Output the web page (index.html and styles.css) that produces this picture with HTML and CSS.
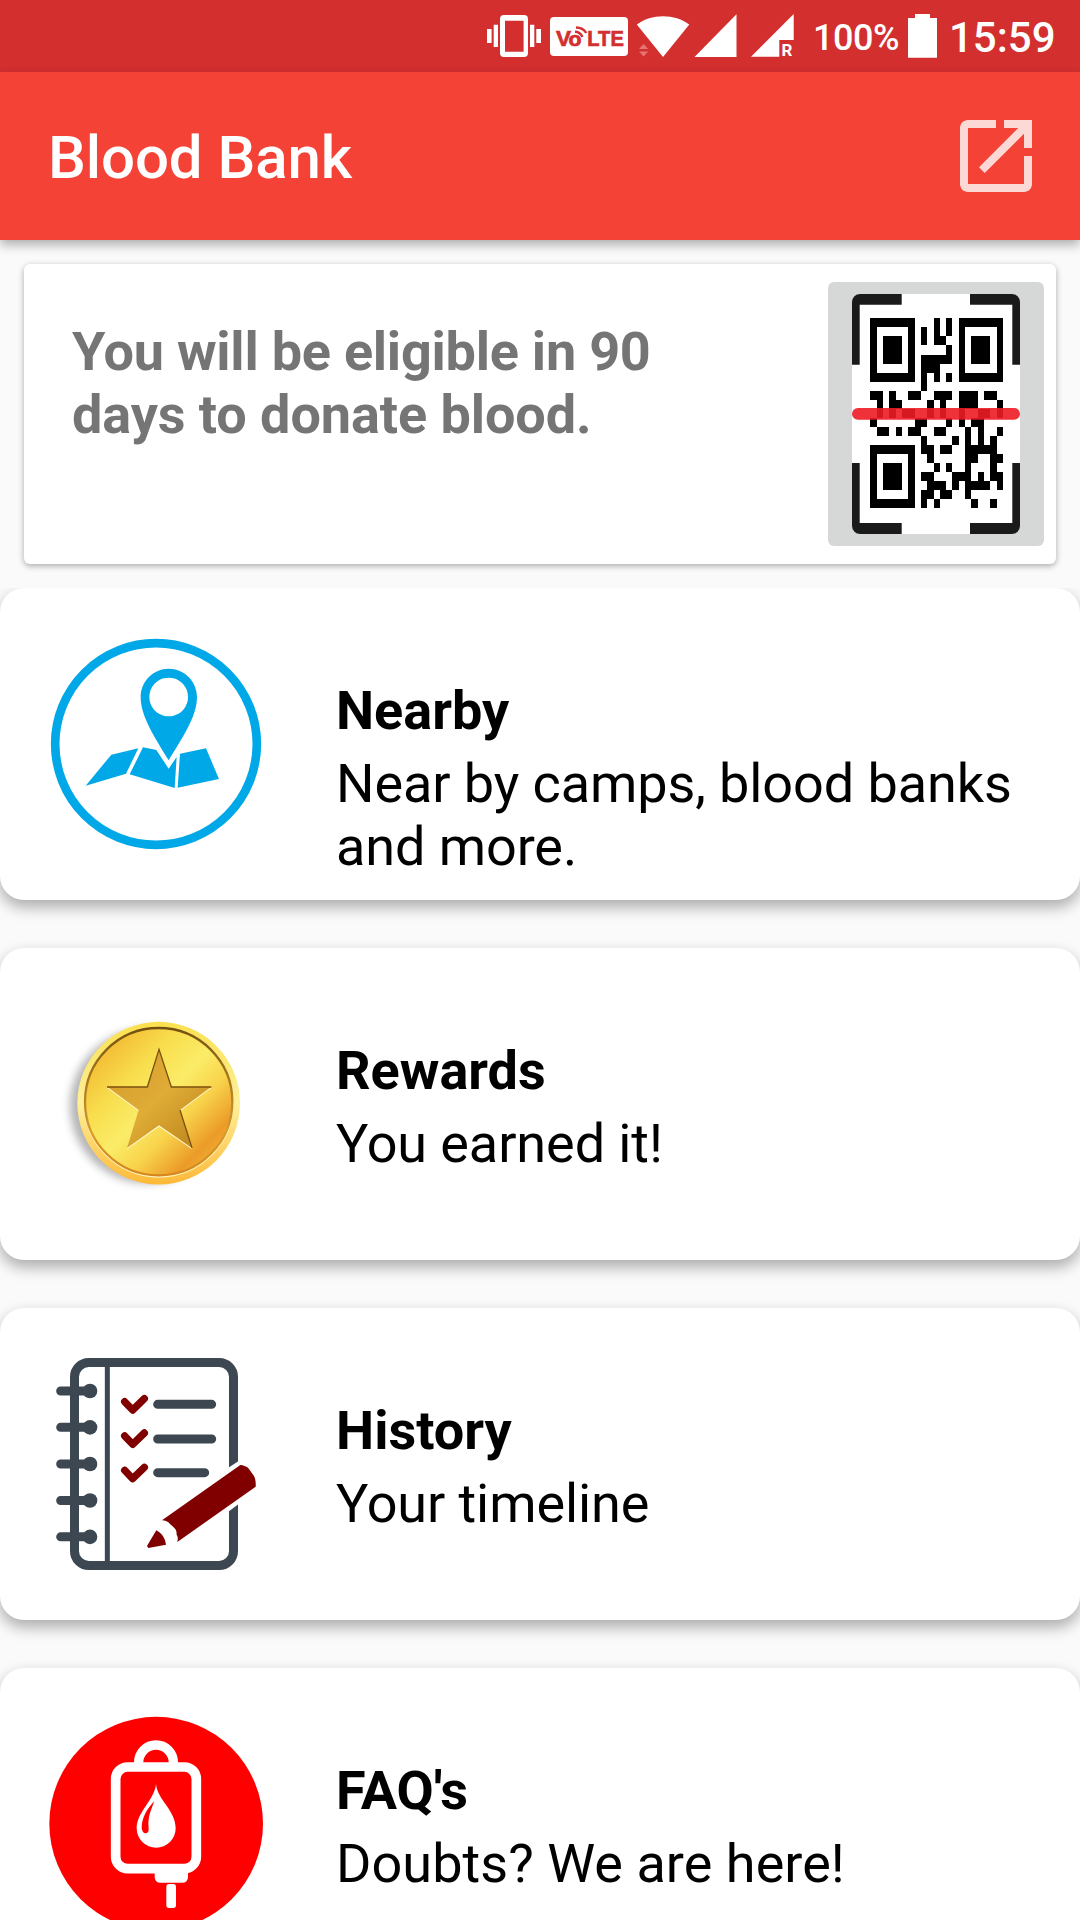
FILE: index.html
```html
<!DOCTYPE html>
<html lang="en">
<head>
<meta charset="utf-8">
<title>Blood Bank</title>
<link rel="stylesheet" href="styles.css">
</head>
<body>
<div class="screen">
  <div class="status-bar">
    <svg class="st-vibrate" width="56" height="72" viewBox="0 0 56 72" fill="#fff">
      <path fill-rule="evenodd" d="M18 15h20a4 4 0 0 1 4 4v34a4 4 0 0 1-4 4H18a4 4 0 0 1-4-4V19a4 4 0 0 1 4-4zM19 20.700v31h18.600v-31z"/>
      <path d="M1 29h4.600v14H1zM7.700 24.700H12V47H7.700zM44 24.700h4.300V47H44zM50.300 29H55v14h-4.700z"/>
    </svg>
    <svg class="st-volte" width="78" height="72" viewBox="0 0 78 72">
      <rect y="17" width="78" height="39" rx="4" fill="#fff"/>
      <g class="volte-text">
        <text x="6" y="45.800" font-size="22.500" textLength="15" lengthAdjust="spacingAndGlyphs">V</text>
        <text x="18.600" y="46.200" font-size="20" textLength="13" lengthAdjust="spacingAndGlyphs">o</text>
        <text x="37.300" y="45.800" font-size="22.500" textLength="36.500" lengthAdjust="spacingAndGlyphs">LTE</text>
      </g>
      <path d="M25 31.800Q30 31.800 32.500 37M26 27.500Q33 27.500 36.300 33" fill="none" stroke="#d32f2f" stroke-width="2.400"/>
    </svg>
    <svg class="st-wifi" width="54" height="72" viewBox="0 0 54 72">
      <path d="M.8 24.600C15 13.300 39 13.300 53.300 24.600L27 57z" fill="#fff"/>
      <path d="M3 49l4.600-5 4.600 5zM3 51.500l4.600 5 4.600-5z" fill="#e37575"/>
    </svg>
    <svg class="st-signal" width="43" height="72" viewBox="0 0 43 72"><path d="M.5 57H42.500V14.300z" fill="#fff"/></svg>
    <svg class="st-signal-r" width="43" height="72" viewBox="0 0 43 72">
      <path d="M0 56.700L42.700 14v26H28.300v16.700z" fill="#fff"/>
      <text class="roaming" x="30.500" y="56">R</text>
    </svg>
    <span class="battery-level">100%</span>
    <svg class="st-battery" width="29" height="72" viewBox="0 0 29 72"><path d="M7 14h15v4h7v39.700H0V18h7z" fill="#fff"/></svg>
    <span class="clock">15:59</span>
  </div>

  <header class="app-bar">
    <h1 class="app-title">Blood Bank</h1>
    <svg class="open-icon" viewBox="0 0 24 24"><path d="M19 19H5V5h7V3H5c-1.110 0-2 .9-2 2v14c0 1.100.89 2 2 2h14c1.100 0 2-.9 2-2v-7h-2v7zM14 3v2h3.590l-9.830 9.830 1.410 1.410L19 6.410V10h2V3h-7z"/></svg>
  </header>

  <section class="status-card">
    <p class="eligibility"><span class="waiting-period">You will be eligible in 90</span> days to donate blood.</p>
    <div class="qr-button">
      <svg width="168" height="240" viewBox="0 0 168 240">
        <rect width="168" height="240" rx="8" fill="#fff"/>
        <path d="M0 60h8v120H0zM160 60h8v120h-8z" fill="#fff"/>
        <path fill="#1a1a1a" d="M8 0H49.700V10.700H7.700V70.700H0V8A8 8 0 0 1 8 0zM160 0H118V10.700H160.300V70.700H168V8A8 8 0 0 0 160 0zM8 240H49.700V229H7.700V169H0V232A8 8 0 0 0 8 240zM160 240H118V229H160.300V169H168V232A8 8 0 0 1 160 240z"/>
        <g transform="translate(18.330 24.330) scale(6.320 9.050)" shape-rendering="crispEdges">
          <path fill-rule="evenodd" d="M0 0h7v7h-7zM1 1v5h5v-5zM2 2h3v3h-3zM14 0h7v7h-7zM15 1v5h5v-5zM16 2h3v3h-3zM0 14h7v7h-7zM1 15v5h5v-5zM2 16h3v3h-3z"/>
          <path fill="none" stroke="#000" d="M10 .5h1m1 0h1M8 1.500h1m1 0h1m1 0h1M8 2.500h1m1 0h2M12 3.500h1M8 4.500h5M8 5.500h3M8 6.500h1m1 0h1m1 0h1M8 7.500h1M0 8.500h2m1 0h1m2 0h2m2 0h3m1 0h3m1 0h2M1 9.500h1m1 0h2m4 0h1m1 0h1m2 0h3m3 0h1M1 10.500h1m1 0h1m1 0h2m2 0h1m1 0h1m2 0h1m2 0h2m1 0h1M0 11.500h1m6 0h2m3 0h1m1 0h1m1 0h2M1 12.500h2m1 0h1m1 0h2m2 0h2m3 0h1m1 0h1m2 0h1M8 13.500h1m4 0h1m1 0h1m1 0h1m1 0h1M8 14.500h2m1 0h2m2 0h5M9 15.500h1m5 0h2m2 0h2M10 16.500h1m1 0h1m2 0h1m3 0h1M8 17.500h2m3 0h3m1 0h1m1 0h2M9 18.500h3m1 0h1m1 0h4m1 0h1M8 19.500h2m1 0h2m2 0h1M8 20.500h1m1 0h1m5 0h1m2 0h1"/>
        </g>
        <rect y="114" width="168" height="11.800" rx="5.900" fill="#ed1c24" fill-opacity=".9"/>
      </svg>
    </div>
  </section>

  <main class="menu">
    <article class="menu-card">
      <svg class="menu-icon" viewBox="54 48 648 648">
        <circle cx="378" cy="372" r="302.500" fill="none" stroke="#00a8e8" stroke-width="26"/>
        <g fill="#00a8e8">
          <path d="M244 404L325 385 288 461 167 497z"/>
          <path d="M339 382L379 390 416 446 440 411 434 504 299 463z"/>
          <path d="M450 401L528 385 567 477 443 503z"/>
          <path fill-rule="evenodd" d="M416 146C463 146 501 184 501 231C501 291 455 356 416 421C377 356 332 291 332 231C332 184 370 146 416 146zM416 173a58 58 0 1 0 .1 0z"/>
        </g>
      </svg>
      <div class="menu-text">
        <h2>Nearby</h2>
        <p>Near by camps, blood banks and more.</p>
      </div>
    </article>

    <article class="menu-card">
      <svg class="menu-icon" viewBox="54 18 648 648">
        <defs>
          <linearGradient id="rim" x1="0" y1="0" x2="0" y2="1"><stop offset="0" stop-color="#fbe04e"/><stop offset=".5" stop-color="#fff09a"/><stop offset="1" stop-color="#fdb938"/></linearGradient>
          <linearGradient id="rimInner" x1="0" y1="0" x2="0" y2="1"><stop offset="0" stop-color="#74500f"/><stop offset=".35" stop-color="#a87a1c"/><stop offset=".7" stop-color="#d99a2c"/><stop offset="1" stop-color="#d4861c"/></linearGradient>
          <linearGradient id="face" x1=".1" y1=".1" x2=".9" y2=".9"><stop offset="0" stop-color="#f2b630"/><stop offset=".28" stop-color="#f8de4e"/><stop offset=".5" stop-color="#fbec68"/><stop offset=".68" stop-color="#f8d24a"/><stop offset=".88" stop-color="#eb9b28"/><stop offset="1" stop-color="#f2b23a"/></linearGradient>
          <linearGradient id="star" x1="0" y1="0" x2="1" y2="1"><stop offset="0" stop-color="#d39a2a"/><stop offset=".5" stop-color="#dfac36"/><stop offset="1" stop-color="#b87e18"/></linearGradient>
          <filter id="soft" x="-20%" y="-20%" width="140%" height="140%"><feGaussianBlur stdDeviation="13"/></filter>
        </defs>
        <circle cx="352" cy="348" r="232" fill="#777" opacity=".55" filter="url(#soft)"/>
        <circle cx="386" cy="339.500" r="244" fill="url(#rim)"/>
        <circle cx="386" cy="337" r="226" fill="#fff3b8"/>
        <circle cx="386" cy="335" r="221" fill="url(#face)" stroke="url(#rimInner)" stroke-width="7"/>
        <path d="M387 182L424 294H544L450 364 486 478 387 410 291 478 326 364 231 294H352z" fill="#fff6c4"/>
        <path d="M387 178L424 290H544L450 360 486 474 387 406 291 474 326 360 231 290H352z" fill="url(#star)"/>
        <path d="M231 291H352L387 178 424 291H544M450 360L486 474" fill="none" stroke="#7d5210" stroke-width="4"/>
      </svg>
      <div class="menu-text">
        <h2>Rewards</h2>
        <p>You earned it!</p>
      </div>
    </article>

    <article class="menu-card">
      <svg class="menu-icon" viewBox="54 78 648 648">
        <g fill="none" stroke="#3d4752" stroke-width="27">
          <rect x="133.500" y="97.500" width="477" height="609" rx="43"/>
          <path d="M232 104V700" stroke-width="15"/>
          <path stroke-linecap="round" d="M92 183H180M92 292H180M92 402H180M92 511.500H180M92 620.500H180M383 223H545M383 327H545M383 428H524"/>
        </g>
        <g fill="#3d4752"><circle cx="180" cy="183" r="22"/><circle cx="180" cy="292" r="22"/><circle cx="180" cy="402" r="22"/><circle cx="180" cy="511.500" r="22"/><circle cx="180" cy="620.500" r="22"/></g>
        <path d="M595 413L626 393V522L595 545z" fill="#fff"/>
        <g fill="none" stroke="#800000" stroke-width="22" stroke-linecap="round" stroke-linejoin="round"><path d="M284 215L308 240 343 206M284 318L308 343 343 309M284 421L308 446 343 412"/></g>
        <path d="M396 571L631 405C640 406 648 409 654 413L672 438C676 446 678 457 677 470L442 636C444 626 444 620 440 615C440 604 438 598 433 594C428 589 424 586 420 582C414 575 406 571 396 571zM379 601C395 610 406 624 408 644L355 654 351 648z" fill="#800000"/>
      </svg>
      <div class="menu-text">
        <h2>History</h2>
        <p>Your timeline</p>
      </div>
    </article>

    <article class="menu-card">
      <svg class="menu-icon" viewBox="54 48 648 648">
        <circle cx="378.500" cy="371" r="320.500" fill="#f00"/>
        <path d="M326 190V187a52 52 0 0 1 104 0V190" fill="none" stroke="#fff" stroke-width="28"/>
        <rect x="257" y="201" width="242" height="305" rx="36" fill="none" stroke="#fff" stroke-width="29"/>
        <path d="M374 515H474V530Q474 548 456 548H392Q374 548 374 530z" fill="#fff"/>
        <rect x="409" y="552" width="29" height="72" rx="8" fill="#fff"/>
        <path fill="#fff" d="M378 252C382 300 437 330 437 385a58.500 58.500 0 0 1-117 0C320 335 374 300 378 252z"/>
        <path fill="#f00" d="M373 303C352 326 335 352 335 384C337 396 342 400 347 400C353 400 357 394 356 384C352 350 364 330 373 303z"/>
      </svg>
      <div class="menu-text">
        <h2>FAQ's</h2>
        <p class="loose">Doubts? We are here!</p>
      </div>
    </article>
  </main>
</div>
</body>
</html>
```
FILE: styles.css
```css
* { box-sizing: border-box; margin: 0; padding: 0; }

body {
  background: #fafafa;
  font-family: Roboto, "Liberation Sans", sans-serif;
  color: #000;
}

svg { display: block; flex: none; }

.screen {
  width: 1080px;
  height: 1920px;
  overflow: hidden;
  display: flex;
  flex-direction: column;
}

/* System status bar */
.status-bar {
  flex: none;
  height: 72px;
  background: #d32f2f;
  color: #fff;
  display: flex;
  align-items: center;
  padding-left: 486px;
  font-weight: 500;
  white-space: nowrap;
}
.st-volte { margin-left: 8px; }
.st-wifi { margin-left: 8px; }
.st-signal { margin-left: 4px; }
.st-signal-r { margin-left: 14px; }
.volte-text {
  font-family: "Liberation Sans", sans-serif;
  font-weight: 700;
  fill: #d32f2f;
  stroke: #d32f2f;
  stroke-width: .7px;
}
.roaming { font: 700 17px Roboto, sans-serif; fill: #fff; }
.battery-level {
  margin-left: 19px;
  width: 89px;
  padding-top: 3px;
  font-size: 36px;
  line-height: 76px;
  letter-spacing: -.5px;
}
.st-battery { margin-left: 6px; }
.clock { margin-left: 12px; padding-top: 4px; font-size: 42px; line-height: 74px; }

/* App bar */
.app-bar {
  flex: none;
  height: 168px;
  padding: 0 36px 0 48px;
  display: flex;
  align-items: center;
  justify-content: space-between;
  background: #f44336;
  box-shadow: 0 5px 10px rgba(0, 0, 0, .3);
}
.app-title {
  padding-top: 4px;
  font-size: 60px;
  font-weight: 500;
  line-height: 70px;
  letter-spacing: -.1px;
  color: #fff;
}
.open-icon { width: 96px; height: 96px; fill: #fff; fill-opacity: .8; }

/* Eligibility card */
.status-card {
  flex: none;
  height: 300px;
  margin: 24px;
  padding: 18px 12px 18px 48px;
  display: flex;
  justify-content: space-between;
  background: #fff;
  border-radius: 6px;
  box-shadow: 0 2px 6px rgba(0, 0, 0, .32);
}
.eligibility {
  width: 620px;
  padding-top: 38px;
  font-size: 54px;
  font-weight: 700;
  line-height: 63px;
  letter-spacing: -.08px;
  color: #757575;
}
.waiting-period { letter-spacing: -.24px; }
.qr-button {
  width: 216px;
  height: 264px;
  display: flex;
  align-items: center;
  justify-content: center;
  background: #d6d7d7;
  border-radius: 6px;
}

/* Menu list */
.menu {
  flex: 1;
  min-height: 0;
  overflow: hidden;
  display: flex;
  flex-direction: column;
  gap: 48px;
}
.menu-card {
  flex: none;
  height: 312px;
  padding: 48px;
  display: flex;
  gap: 72px;
  background: #fff;
  border-radius: 24px;
  box-shadow: 0 7px 15px rgba(0, 0, 0, .32);
}
.menu-icon { width: 216px; height: 216px; }
.menu-text {
  flex: 1;
  padding-top: 43px;
  display: flex;
  flex-direction: column;
  gap: 10px;
  font-size: 54px;
  line-height: 63px;
}
.menu-text h2 { font-size: 54px; font-weight: 700; }
.menu-text p { letter-spacing: -.09px; }
.menu-text .loose { letter-spacing: .05px; }
```
